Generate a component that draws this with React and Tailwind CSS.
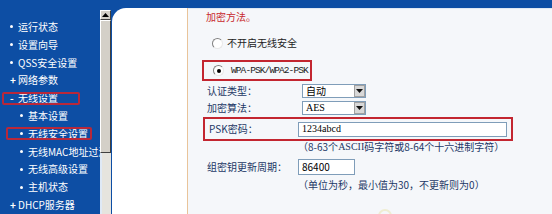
import React from "react";

const cjk = { fontFamily: '"Noto Sans CJK SC", "Liberation Sans", sans-serif' };
const serif = { fontFamily: '"Liberation Serif", "Noto Sans CJK SC", serif' };

const menu = [
  { label: "运行状态", mark: "dot", level: 0 },
  { label: "设置向导", mark: "dot", level: 0 },
  { label: "QSS安全设置", mark: "dot", level: 0 },
  { label: "网络参数", mark: "plus", level: 0 },
  { label: "无线设置", mark: "minus", level: 0, boxed: true },
  { label: "基本设置", mark: "dot", level: 1 },
  { label: "无线安全设置", mark: "dot", level: 1, boxed: true },
  { label: "无线MAC地址过滤", mark: "dot", level: 1 },
  { label: "无线高级设置", mark: "dot", level: 1 },
  { label: "主机状态", mark: "dot", level: 1 },
  { label: "DHCP服务器", mark: "plus", level: 0 },
];

function Mark({ type }) {
  if (type === "plus") return <span className="w-[6px] text-[10px] leading-none font-bold">+</span>;
  if (type === "minus") return <span className="w-[6px] text-[10px] leading-none font-bold">-</span>;
  return (
    <span className="w-[6px] flex items-center">
      <span className="w-[3px] h-[3px] rounded-full bg-white" />
    </span>
  );
}

function Radio({ checked }) {
  return (
    <span className="w-[11px] h-[11px] shrink-0 rounded-full border border-t-[#808080] border-l-[#808080] border-r-[#e8e8e8] border-b-[#e8e8e8] bg-white flex items-center justify-center">
      {checked && <span className="w-[4px] h-[4px] rounded-full bg-black" />}
    </span>
  );
}

function Select({ value }) {
  return (
    <div className="w-[64px] h-[14px] border border-[#7f9db9] bg-white flex items-center justify-between">
      <span className="pl-[3px] text-[10px] leading-none text-black" style={value === "AES" ? serif : cjk}>
        {value}
      </span>
      <span className="w-[11px] h-[12px] bg-[#d8d8d8] border border-[#a0a0a0] flex items-center justify-center">
        <svg width="7" height="4" viewBox="0 0 7 4">
          <path d="M0 0h7L3.5 4z" fill="#111" />
        </svg>
      </span>
    </div>
  );
}

export default function App() {
  return (
    <div className="w-[552px] h-[214px] bg-[#0d4ea4] flex overflow-hidden" style={cjk}>
      {/* side menu */}
      <div className="w-[100px] pt-[18px] flex flex-col text-white text-[10px] overflow-hidden">
        {menu.map((item, i) => (
          <div key={i} className="h-[18px] flex items-center relative whitespace-nowrap">
            {item.boxed && (
              <span
                className={
                  item.level === 0
                    ? "absolute left-[2px] w-[78px] top-[3px] h-[13px] border-2 border-[#b8283a] rounded-[2px]"
                    : "absolute left-[6px] w-[86px] top-[2px] h-[13px] border-2 border-[#b8283a] rounded-[2px]"
                }
              />
            )}
            <span className={item.level === 0 ? "ml-[10px] flex items-center" : "ml-[20px] flex items-center"}>
              <Mark type={item.mark} />
            </span>
            <span className="ml-[2px] leading-none">{item.label}</span>
          </div>
        ))}
      </div>

      {/* scrollbar */}
      <div className="w-[11px] pt-[10px] flex flex-col">
        <div className="h-[10px] bg-[#d4d0c8] border-t border-l border-white border-r border-b border-r-[#404040] border-b-[#404040] flex items-center justify-center">
          <svg width="7" height="4" viewBox="0 0 7 4">
            <path d="M3.5 0L7 4H0z" fill="#000" />
          </svg>
        </div>
        <div className="h-[133px] bg-[#d4d0c8] border-t border-l border-white border-r border-b border-r-[#404040] border-b-[#404040]" />
        <div className="flex-1 bg-[#e6e4de] border-l-2 border-[#dfe9f6]" />
      </div>

      {/* main */}
      <div className="flex-1 pt-[8px] pl-[1px] flex">
        <div className="flex-1 bg-white rounded-tl-[14px] flex">
          <div className="w-[76px] border-r border-[#e9c49a]" />
          <div className="flex-1 bg-[#f5f7fa] border-t border-[#dfe8f3] flex flex-col text-[10px] text-[#1d3866] relative">
            <div className="h-[16px] flex items-center pl-[18px] text-[#c8282d] leading-none">加密方法。</div>

            <div className="mt-[10px] h-[16px] flex items-center pl-[24px]">
              <Radio />
              <span className="ml-[4px] leading-none text-[#222]">不开启无线安全</span>
            </div>

            <div className="mt-[9px] ml-[14px] w-[110px] h-[21px] border-2 border-[#c32630] flex items-center pl-[9px] whitespace-nowrap overflow-hidden">
              <Radio checked />
              <span
                className="ml-[7px] text-[9.5px] leading-none tracking-[-0.9px] text-[#222] whitespace-nowrap"
                style={{ fontFamily: '"Liberation Mono", monospace' }}
              >
                WPA-PSK/WPA2-PSK
              </span>
            </div>

            <div className="h-[19px] flex items-center pl-[19px]">
              <span className="w-[95px] leading-none">认证类型：</span>
              <Select value="自动" />
            </div>

            <div className="h-[16px] flex items-center pl-[19px]">
              <span className="w-[95px] leading-none">加密算法：</span>
              <Select value="AES" />
            </div>

            <div className="mt-[1px] ml-[15px] w-[310px] h-[24px] border-2 border-[#c32630] flex items-center pl-[4px]">
              <span className="w-[89px] leading-none">PSK密码：</span>
              <div className="w-[209px] h-[15px] border border-[#7f9db9] bg-white flex items-center pl-[3px]">
                <span className="text-[10px] leading-none text-black" style={serif}>1234abcd</span>
              </div>
            </div>

            <div className="h-[12px] flex items-center pl-[110px] leading-none whitespace-nowrap">
              （8-63个<span style={serif}>ASCII</span>码字符或8-64个十六进制字符）
            </div>

            <div className="mt-[6px] h-[16px] flex items-center pl-[19px]">
              <span className="w-[91px] leading-none">组密钥更新周期：</span>
              <div className="w-[57px] h-[16px] border border-[#7f9db9] bg-white flex items-center pl-[3px]">
                <span className="text-[10px] leading-none text-black">86400</span>
              </div>
            </div>

            <div className="mt-[3px] h-[14px] flex items-center pl-[110px] leading-none whitespace-nowrap">
              （单位为秒，最小值为30，不更新则为0）
            </div>

            <span className="absolute left-[190px] top-[200px] w-[14px] h-[14px] rounded-full border-2 border-[#efedd2]" />
          </div>
        </div>
      </div>
    </div>
  );
}
